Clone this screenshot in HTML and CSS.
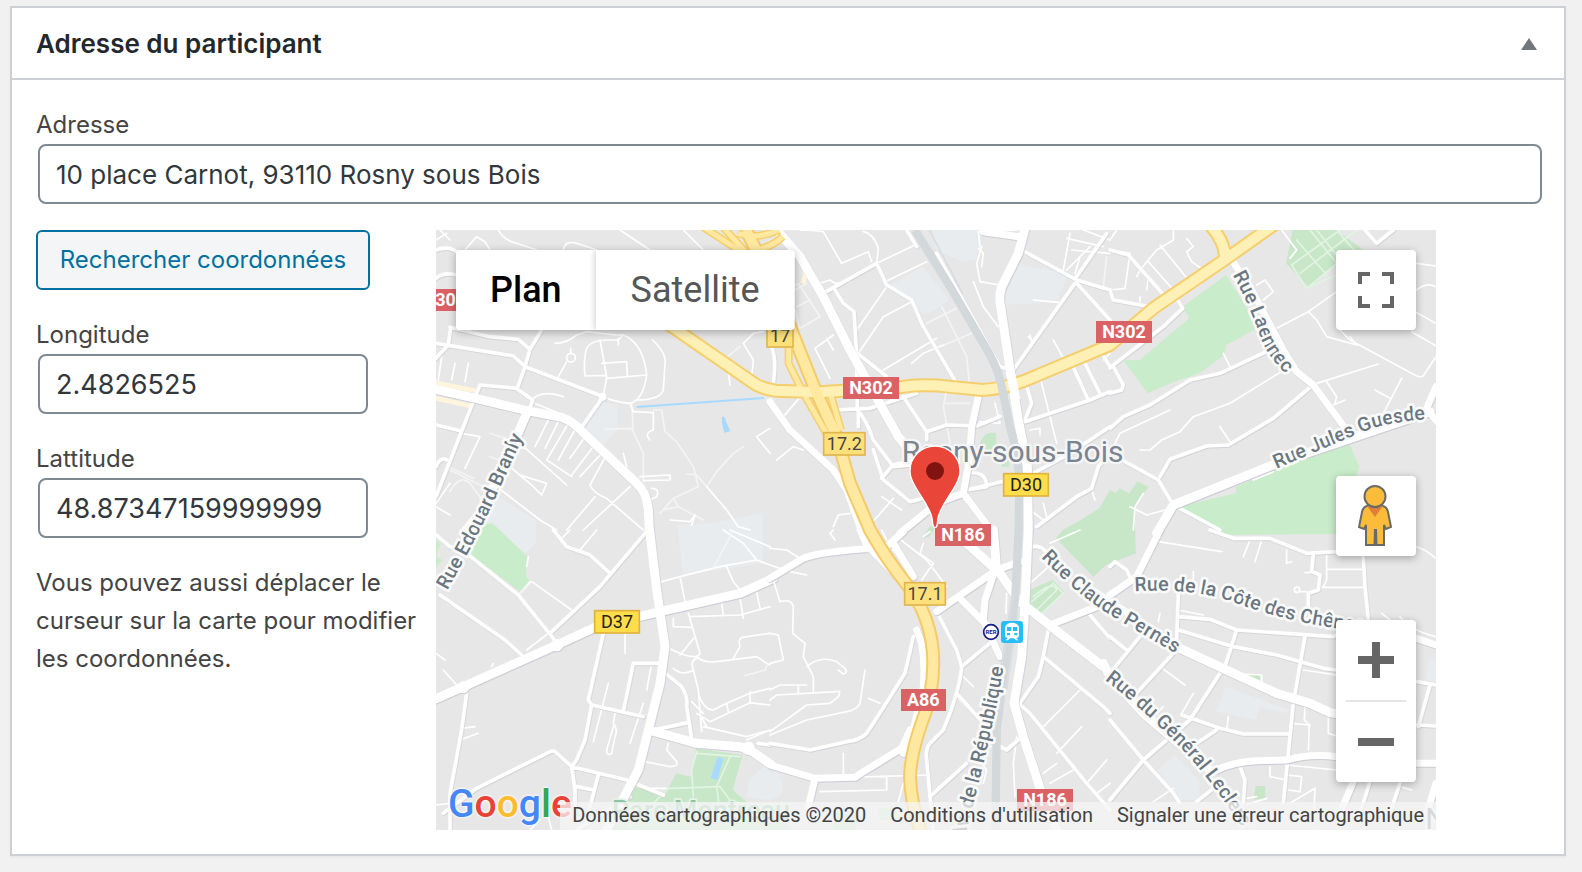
FILE: index.html
```html
<!DOCTYPE html>
<html lang="fr">
<head>
<meta charset="utf-8">
<title>Adresse du participant</title>
<link rel="stylesheet" href="styles.css">
</head>
<body>
<section class="postbox">
  <header class="postbox-header">
    <h2 class="postbox-title">Adresse du participant</h2>
    <button class="toggle" type="button" aria-label="Replier le panneau"><svg class="toggle-icon" viewBox="0 0 16 12"><path d="M8 0 16 12H0z"/></svg></button>
  </header>
  <div class="inside">
    <div class="field">
      <label for="adresse">Adresse</label>
      <input id="adresse" type="text" value="10 place Carnot, 93110 Rosny sous Bois">
    </div>
    <div class="columns">
      <div class="coords">
        <button class="button" type="button">Rechercher coordonnées</button>
        <div class="field">
          <label for="longitude">Longitude</label>
          <input id="longitude" type="text" value="2.4826525">
        </div>
        <div class="field">
          <label for="lattitude">Lattitude</label>
          <input id="lattitude" type="text" value="48.87347159999999">
        </div>
        <p class="help">Vous pouvez aussi déplacer le curseur sur la carte pour modifier les coordonnées.</p>
      </div>
      <div class="map">
        <svg class="map-canvas" viewBox="0 0 3000 1800" preserveAspectRatio="xMidYMid slice" role="img" aria-label="Carte de Rosny-sous-Bois">
          <defs>
            <path id="n302" d="M640 243L960 464Q985 478 1020 482L1152 487L1402 470Q1470 462 1540 470L1640 480Q1720 475 1802 437L2022 345L2152 235L2372 85L2520 -20M2318 -20Q2372 40 2366 90"/>
            <path id="ramps" d="M800 -10L930 75L1010 170M860 -10L950 90M905 10Q960 30 1030 0M960 60Q1010 50 1040 20M1058 340V400L1102 490L1180 625M1180 480L1215 600"/>
            <path id="a86" d="M930 0L985 110L1062 290L1138 480L1202 620L1242 760L1302 900Q1350 985 1402 1050Q1492 1160 1492 1300Q1490 1400 1460 1470Q1424 1570 1422 1640Q1424 1720 1456 1810"/>
            <path id="p-branly" d="M34 1082Q130 910 180 800L282 575"/>
            <path id="p-laennec" d="M2390 134Q2444 234 2472 318Q2500 400 2610 484"/>
            <path id="p-guesde" d="M2522 716Q2650 660 2800 598Q2880 572 3000 566"/>
            <path id="p-cote" d="M2096 1084Q2260 1074 2380 1112Q2570 1184 2780 1204"/>
            <path id="p-pernes" d="M1815 982Q1930 1100 2030 1160L2270 1300"/>
            <path id="p-leclerc" d="M2006 1350Q2130 1444 2246 1566Q2330 1656 2450 1840"/>
            <path id="p-rep" d="M1584 1830Q1640 1620 1670 1480Q1700 1350 1714 1220"/>
          </defs>
          <rect class="land" width="3000" height="1800"/>

          <g class="built">
            <path d="M495 515L545 525V595L500 648L450 590zM170 790L300 870V940L250 985L150 900zM725 885L830 880L980 850L980 1000L740 1035zM895 915L960 990L870 1010z"/>
            <path d="M1490 0H1640L1620 90L1580 95L1500 60zM1365 165L1460 110L1540 210L1470 255L1410 210zM1745 105L1900 130L1860 215L1700 225z"/>
            <path d="M2370 1370L2560 1440L2550 1450L2470 1430L2460 1470L2340 1445zM2215 1575L2290 1650V1710H2230L2165 1620zM2980 1285L3000 1290V1355L2970 1350zM940 1650L1002 1590L1030 1640Q1060 1700 1002 1710L930 1700z"/>
          </g>
          <g class="park">
            <path d="M2370 135L2468 293L2370 345L2365 375L2290 430L2215 455L2135 490L2062 390L2110 390L2260 265L2240 230z"/>
            <path class="soft" d="M2570 0H2700L2790 65L2700 100L2620 175L2550 100z"/>
            <path d="M2738 635L2770 710L2700 900V912L2360 915L2225 830L2400 790L2400 770L2520 720z"/>
            <path class="soft" d="M1880 900L1925 875L1990 835L2022 780L2040 790L2050 775L2080 790L2104 754L2138 770L2095 830L2100 970L2010 1005L1972 1040L1860 925z"/>
            <path class="soft" d="M1630 650Q1640 600 1680 610L1682 660L1640 665zM1700 680h20v30h-24zM1780 1080L1850 1050L1885 1085L1820 1150L1780 1130zM1510 870L1480 920L1460 925L1480 890zM2400 1330L2472 1332V1352z"/>
            <path d="M132 885L170 880L275 980L270 1040L285 1055L252 1085L100 970zM0 930L14 940L0 980zM0 980L20 990L0 1010z"/>
            <path class="soft" d="M780 1555L920 1575L890 1680L960 1740L1080 1800H520L600 1668L690 1690L720 1630L765 1640zM1330 1735h50v36h-50zM1200 1750h70l-10 50h-70zM2458 1668h30v40h-34z"/>
          </g>
          <g class="water">
            <path d="M857 562q8-8 12 10l14 32-18 4q-8-20-8-46zM845 1580l17 6-18 64-20-6z"/>
            <path class="canal" d="M602 531L984 504"/>
          </g>
          <g class="sand"><path d="M0 458L118 482M0 505L105 528M1085 60L1110 130L1100 160"/></g>

          <g class="w4 faint" transform="translate(-18 -30)">
            <path d="M610 630L605 550M525 628L605 625L640 700V780M670 570H695L705 635L740 665L790 740L805 800L730 835L690 880M770 762L800 765L830 800M830 800L860 755L910 700L940 680M180 640L240 660M180 710L250 735M60 815Q90 760 120 790L150 830L160 870M60 750L180 810M885 415L930 380M55 740L130 775M700 870L745 860L820 900M730 835L745 860"/>
          </g>
          <g class="w4" transform="translate(-18 -30)">
            <path d="M205 30Q220 60 260 70L320 90M105 90L140 50L165 65L180 90M400 90Q405 60 440 70L500 90M570 30L660 90M760 30L820 90M18 60L50 40M30 30L60 60"/>
            <path d="M375 370Q410 370 440 345L470 335L560 345L580 345Q640 370 650 465Q640 540 600 550Q550 545 520 530M510 360L530 470L520 530M465 468L530 466M465 468Q460 430 468 390Q480 360 530 360L565 360L580 345M515 430L590 425L592 468M530 475L650 465M565 355V375M668 360Q710 400 705 430L700 510Q690 540 620 540M385 470L410 425M422 385V400"/><circle cx="423" cy="413" r="13"/>
            <path d="M303 545L400 585M310 535Q340 510 400 530M600 550L610 575L670 578V630Q640 640 660 660M940 370L970 340L1000 335M940 370L970 420L965 470M895 455L900 495M980 650L1020 625M980 650L1020 700"/>
            <path d="M355 600L315 680M385 605L345 685M415 610L350 720L425 770M440 620L385 720M465 650L420 715M490 680L425 765M515 700L450 770M525 712L480 795Q490 820 530 835L640 930M270 670L410 795M240 740L310 800L335 825L350 790L270 765M75 430L65 480M115 430L105 485M35 410L25 480M95 640L150 650L105 745M200 800L330 900L380 930M630 770L720 765V780L640 782M665 805Q690 805 680 830L665 838M830 800L890 870L925 920L960 930M720 900L780 905L795 885L785 915M600 800L460 930M495 830L410 930M18 860L60 885M18 850L60 790M580 700L590 740"/>
          </g>
          <g class="w9" transform="translate(-18 -30)">
            <path d="M18 370L250 408L285 440L520 530M520 530L458 618M285 440L262 505L150 495L130 545L18 830M262 508L308 540L295 580M60 322L180 350L265 358L300 388L335 330M300 388L285 440M62 322L55 375L18 415M18 90Q60 75 85 100M18 175Q40 155 80 165M18 615L90 632M18 740Q30 710 50 720"/><circle class="dot" cx="518" cy="530" r="8"/>
          </g>
          <g class="w24" transform="translate(-18 -30)">
            <path d="M18 508L150 538L290 572L395 592Q430 605 460 638L620 790Q650 815 655 870L658 935M292 575L230 720L150 880L100 940"/>
          </g>

          <g class="w4 faint" transform="translate(1002 -30)">
            <path d="M70 200L85 190L150 290L90 325L75 270M75 210L110 190M80 260L120 240M470 310L560 265M515 260L590 410L598 490M510 380L605 340M530 510L520 560L540 670M525 550H600M1010 110L1000 200"/>
          </g>
          <g class="w4" transform="translate(1002 -30)">
            <path d="M90 30Q130 30 160 35L215 130L295 95L305 125M280 35Q310 40 325 85L320 130M150 190L180 180L195 190L240 185M320 130L435 75M350 200L260 330M345 185L470 125M425 245L340 290L265 400M500 355L340 450M520 375L460 400L425 430M190 345L135 385L180 475M170 355L190 390M635 80L620 130L630 185L690 195M625 85L640 100L635 140M610 185L640 260L685 320M790 240L865 247M780 345L785 365M850 360L880 415M775 350L790 365M900 40L880 150M890 55L1000 80M905 90L1020 100M940 30L1020 60M960 80L890 150M915 160L930 110"/>
            <path d="M740 30L625 35L630 80M335 830L395 870M190 920L205 885L240 880M300 915L370 835M100 520L40 590M20 720L70 680L100 690M675 550L690 610L630 605M820 850L830 890M965 810L975 840M780 630L810 625V645M810 470L860 670M780 870L820 900M1000 420L1020 400M640 525L680 510"/>
          </g>
          <g class="w9" transform="translate(1002 -30)">
            <path d="M160 220L320 130L350 195L425 240L460 320L560 490M195 210L220 250L252 275L260 400L262 560M262 400L350 470M195 570L300 565L440 520M262 570Q290 600 310 660L370 740L420 735M365 740L335 775M400 530L470 635L530 615L620 618L690 590M265 580L265 620M310 690L340 780L420 845L480 830M370 735L430 720M470 640V660M5 380Q20 420 10 490M410 30L440 80M500 100L690 440L720 450M755 90L920 180L1020 210M915 190L730 450M920 190L1020 300M1010 40L920 170M905 430L955 540M940 420L990 520M765 605L960 540L1020 515M990 390L1020 440M765 480L785 550L765 600M790 760L900 700L1020 620M1020 700L985 740L965 805L920 830L800 920M590 760Q650 750 650 800L590 810L740 775"/>
          </g>
          <g class="w24" transform="translate(1002 -30)">
            <path d="M20 30L90 110L160 230L240 390L290 480L385 650L500 790"/>
            <path d="M765 25L745 100L695 200Q685 230 692 260L722 460L745 600L772 740L775 935"/>
            <path class="mid" d="M625 530L605 620L598 720L580 820L640 900L670 940M580 820L500 850L390 940M0 545L60 630L190 750L230 810L275 935M640 35L745 50"/>
          </g>

          <g class="w4 onpark" transform="translate(2022 -30)">
            <path d="M545 135L690 30M570 160L740 30M590 205L680 130L600 30M545 135L590 205L690 160M560 60L650 165M620 30L700 130M680 30L740 100"/>
          </g>
          <g class="w4" transform="translate(2022 -30)">
            <path d="M0 60L20 30M190 30V60L140 90L90 150L80 170M150 75L235 180M230 95L250 80L230 55M230 95L245 125L280 150M115 125L190 210M0 90L60 100L45 205L0 210M110 210L115 170M90 245V230M515 30L560 90L540 115M340 400L360 440M0 700L30 640L180 570M90 690H120L155 660L210 635L250 590L360 550L530 445M595 275L500 325M595 275L620 300L650 350L740 375M595 275L680 215M690 330L720 360L920 468Q940 475 945 460L978 410M920 130L978 138M920 210Q950 185 978 200M915 275L978 310M905 335L978 378M620 490L805 432M650 485L680 530L675 550M670 555L705 540M820 580L875 475M795 510L840 535M330 620L360 665M440 195L465 180L490 215L460 240M420 770L430 780L490 755M70 930L75 860L100 820M60 860L110 885L165 870M720 350L740 375"/>
          </g>
          <g class="w9" transform="translate(2022 -30)">
            <path d="M0 90L55 105L170 235M0 210L10 240L130 262M200 235L218 265L160 320L10 435L0 445M10 440L40 495L35 510L0 520M0 625L40 590L120 555L240 480L330 460L490 385M605 498L490 595L355 675L290 678L180 718L150 770M0 700L145 780L190 855M200 860L330 930M765 30L800 70L850 30"/>
          </g>
          <g class="w24" transform="translate(2022 -30)">
            <path class="mid" d="M365 120L420 200L520 390L560 455L610 495L710 630M978 500L950 565L985 610"/><path d="M140 940L190 855L500 730L960 575"/>
          </g>

          <g class="w4" transform="translate(-18 900)">
            <path d="M305 155L425 240M290 110L295 80M300 155L270 190M290 360L355 310M500 0L450 60M420 0L390 30M18 370L45 390M40 420L80 465M190 400L185 410M585 310V370M535 460L490 635M555 550L550 580Q565 600 555 620L545 670Q530 680 530 660L550 590M665 400L650 480M640 520L600 640M95 595L135 590M90 630L145 610M18 825L60 820M695 155L750 140L870 110L980 90M750 140L765 215M890 110L910 155L930 180M875 220L880 255M930 205L940 265M980 185L990 235M780 260L930 255L1020 230M730 265V290L785 292M775 250L810 370Q800 390 750 370L715 355M795 320L750 375M800 380Q820 400 860 395L980 380L1010 400L1020 405M730 415Q760 440 790 420Q780 390 800 385M790 420L805 480L815 605M805 490Q820 540 850 540L890 520L960 490L1020 475M785 515L820 550M810 555L830 590M800 550L840 575L960 518L1020 525M890 520L895 545M960 485V520M820 590L950 620L1020 600M950 630L1020 600M910 385L930 350Q920 320 950 320L1020 310M645 695L720 710Q745 710 740 695L710 660L715 640M710 775H650L600 765M880 0L940 40L980 90L1020 105M900 0L1020 50M330 870L300 900M355 860L365 900"/>
            <path class="faint" d="M945 437L1005 420L1012 405M905 10L850 115M270 190L305 155"/>
          </g>
          <g class="w4 onpark" transform="translate(-18 900)">
            <path d="M800 670L930 680M800 665L785 720L790 800M700 780L720 775L870 770L900 810L930 820M900 680L860 770L870 850M700 790L600 890M740 850L830 830"/>
          </g>
          <g class="w9" transform="translate(-18 900)">
            <path d="M18 15L60 50L110 70L265 195L370 325M370 0L410 50L480 75L540 130M650 5L510 170L360 310M30 195L225 330L275 375M520 310L475 510L485 525L640 560M485 525L465 630L440 690L425 710L435 780V850M610 400H690M610 400L580 545M425 710L590 750M590 750L700 795M505 735L475 850M440 770L490 780M425 710L375 665Q370 660 350 670L140 775L40 850M110 490L95 600L60 790V900M700 425L755 470Q775 500 770 530L785 625M670 600L775 578M985 640L1020 645M600 800L440 900"/>
          </g>
          <g class="w24" transform="translate(-18 900)">
            <path d="M658 -5L680 180L705 350L690 460L655 600L625 720L530 900M655 600L800 640L930 650L960 660L1025 705"/><path d="M10 510L100 470L380 345L500 290L690 245L930 190L1030 145"/>
            <circle class="dot" cx="381" cy="345" r="15"/><circle class="dot" cx="100" cy="472" r="14"/><circle class="dot" cx="955" cy="655" r="16"/>
          </g>

          <g class="w4" transform="translate(1002 900)">
            <path d="M190 0L180 10L195 30M0 55L50 60L90 85M0 105L60 125L110 135M10 150L30 215Q65 205 70 230L68 310L105 340L100 380L130 440V490M0 310L25 315L40 390L0 400M110 410Q150 375 200 395L225 415Q235 430 220 432L205 420M0 480L30 465H110M85 465V490M0 510L20 495L200 485Q215 480 205 500L180 520L110 525L0 605M285 420L270 520Q260 540 230 545L110 570L0 615M295 505L330 520M220 670V735M130 745L470 735M350 740V780L150 785M400 760L385 815M380 20L470 90L530 170M460 40L450 70L490 100L455 150M575 435L610 470M560 500L640 580M660 340L575 410M620 680L650 720L640 760M930 480L820 590M935 590L860 670M820 730L860 700M910 720L840 760M1010 690L950 760M980 790L1020 760M740 620L730 700L735 800M780 160L870 80M840 40L930 0M710 190L708 250M690 650H660"/>
            <path d="M460 20L480 5M335 0L350 30M355 45L430 130"/>
          </g>
          <g class="w4 onpark" transform="translate(1002 900)"><path d="M785 215L850 160L880 190L815 250M790 200Q850 150 860 180L800 240"/></g>
          <g class="w9" transform="translate(1002 900)">
            <path d="M500 245L560 360L575 410Q570 480 520 600L480 640Q465 660 470 690L480 800L490 900M430 320L405 430Q330 550 290 610Q270 630 230 635L120 660L0 640M480 800L590 700M835 300L820 380L805 440L750 520M820 380L1000 530L1020 550M745 520L780 550L950 760L1020 840M750 625L710 660L690 650M960 255L1020 325M560 490L640 580M575 410L660 340"/>
            <path d="M790 50Q815 45 830 70"/>
          </g>
          <g class="w24" transform="translate(1002 900)">
            <path class="mid" d="M0 145L100 85Q150 65 310 55M310 55L350 50L400 5M0 705L135 745L255 742L280 725L395 655L420 600M135 745L115 830M500 245L550 210L680 120L750 95M565 200L640 275L670 310M675 120L645 210L640 270L690 380M440 300L455 340Q465 400 460 470L430 600L400 670M270 0L290 45L400 160M370 40L430 140"/>
            <path d="M590 40L690 130L750 215L850 295L1025 430M775 -5L765 220L755 380L732 520L760 620L815 790L860 900M670 0L680 120"/>
            <path class="mid" d="M840 285L980 230L1025 195"/>
          </g>

          <g class="w4" transform="translate(2022 900)">
            <path d="M145 35L335 65M420 30L400 80M455 30L435 95M530 60V100L545 95M650 75V150L640 170M650 118H755M585 128H620M630 172H760M570 185H590M280 255L205 240M150 250L145 275M250 125V150M815 250L840 270M150 410L225 465M250 490L215 550M160 530L130 560M355 560L350 600M260 640L330 600M130 815L190 775M360 430L455 435V455M580 420L680 435M585 525L583 570L598 585L595 660M545 580L600 585M655 560V610L680 618M480 710V740L530 750M530 735L575 740L570 785L535 780M540 820L615 775L610 880M440 800L410 805M390 830L470 805M530 705L680 720M870 770L905 780M870 260Q900 300 978 320M920 50Q950 60 978 85M380 840L440 870"/><circle cx="561" cy="179" r="8"/>
          </g>
          <g class="w9" transform="translate(2022 900)">
            <path d="M300 0L370 25L480 25L590 70L680 65M610 75L605 125L630 135L625 180L595 190V240M760 80L765 170L775 270M0 110L15 95L50 120L65 150M205 190L200 330M205 260L300 268L380 300L670 320L690 310M205 300L370 350L500 375L640 415L680 420M380 300L345 410M585 320L550 520L520 820M90 320L0 430M0 320L50 360M200 340L190 370L80 490M330 430L240 570L100 690L0 810M215 555L330 595L400 612H540M0 570L100 690L190 790L210 820M390 710L405 750L400 820M780 755L750 850M870 760L840 850M920 455L978 465M960 465L925 590M920 585L978 588M320 600L260 640M260 815L330 760"/>
          </g>
          <g class="w24" transform="translate(2022 900)">
            <path class="mid" d="M150 0L80 140L0 195"/><path d="M210 355L345 418L500 490L600 520L660 548L700 555M-20 400L0 440L100 550L300 720"/>
            <path class="mid" d="M-100 150L100 280L215 358M320 720Q370 695 440 692L530 690Q600 670 680 680M730 755L690 850M920 325L978 345M918 700H978M978 760L950 850"/>
          </g>

          <use href="#ramps" class="yellow-case thin"/><use href="#n302" class="yellow-case"/><use href="#a86" class="orange-case"/>
          <use href="#ramps" class="yellow thin"/><use href="#n302" class="yellow"/><use href="#a86" class="orange"/>
          <path class="over" d="M1722 420L1740 510"/>
          <path class="rail" d="M1437 0L1542 170L1642 340Q1680 400 1695 460L1722 590Q1750 690 1750 760L1748 900L1738 1100L1702 1340L1682 1500L1678 1800"/>
          <path class="rail-line" d="M1480 0L1580 190M1730 1100L1700 1290L1672 1500M1745 1150L1712 1380"/>

          <g class="street">
            <text><textPath href="#p-branly">Rue Edouard Branly</textPath></text>
            <text><textPath href="#p-laennec">Rue Laennec</textPath></text>
            <text><textPath href="#p-guesde">Rue Jules Guesde</textPath></text>
            <text><textPath href="#p-cote">Rue de la Côte des Chênes</textPath></text>
            <text><textPath href="#p-pernes">Rue Claude Pernès</textPath></text>
            <text><textPath href="#p-leclerc">Rue du Général Leclerc</textPath></text>
            <text><textPath href="#p-rep">Av. de la République</textPath></text>
          </g>
          <text class="city" x="1730" y="695">Rosny-sous-Bois</text>
          <text class="city" x="3000" y="1796">N</text>
          <text class="park-name" x="528" y="1770">Parc Montreau</text>

          <g class="shield red">
            <rect x="-60" y="177" width="168" height="66"/><text x="44" y="229">302</text>
            <rect x="1221" y="441" width="168" height="66"/><text x="1305" y="493">N302</text>
            <rect x="1980" y="273" width="168" height="66"/><text x="2064" y="325">N302</text>
            <rect x="1497" y="882" width="168" height="66"/><text x="1581" y="934">N186</text>
            <rect x="1395" y="1377" width="135" height="66"/><text x="1462" y="1429">A86</text>
            <rect x="1743" y="1677" width="168" height="66"/><text x="1827" y="1729">N186</text>
          </g>
          <g class="shield exit">
            <rect x="993" y="283" width="78" height="68"/><text x="1032" y="336">17</text>
            <rect x="1163" y="608" width="124" height="67"/><text x="1225" y="661">17.2</text>
            <rect x="1406" y="1058" width="122" height="67"/><text x="1467" y="1110">17.1</text>
          </g>
          <g class="shield county">
            <rect x="1703" y="731" width="134" height="67"/><text x="1770" y="783">D30</text>
            <rect x="476" y="1142" width="134" height="67"/><text x="543" y="1194">D37</text>
          </g>

          <g transform="translate(1695 1173)">
            <rect class="station" width="66" height="66" rx="9"/>
            <path class="train" d="M20 8Q33 3 46 8Q54 12 54 20V42Q54 50 46 51L52 58H45L39 52H27L21 58H14L20 51Q12 50 12 42V20Q12 12 20 8z"/>
            <path class="station" d="M18 18H31V30H18zM36 18H49V30H36zM18 36H27V43H18zM40 36H49V43H40z"/>
          </g>
          <circle class="rer" cx="1665" cy="1206" r="22"/><text class="rer-text" x="1665" y="1213">RER</text>

          <path class="pin" d="M1497 893C1491 893 1490 886 1489 870C1484 820 1422 770 1422 723A75 75 0 0 1 1572 723C1572 770 1510 820 1505 870C1504 886 1503 893 1497 893z"/>
          <circle class="pin-dot" cx="1497" cy="723" r="27"/>
        </svg>
        <div class="map-types">
          <button class="map-type active" type="button">Plan</button><button class="map-type" type="button">Satellite</button>
        </div>
        <button class="control fullscreen" type="button" aria-label="Plein écran"><svg width="36" height="36" viewBox="0 0 18 18"><path d="M0 0v6h2V2h4V0zM12 0v2h4v4h2V0zM16 12v4h-4v2h6v-6zM2 12H0v6h6v-2H2z"/></svg></button>
        <div class="map-side">
          <button class="control" type="button" aria-label="Street View">
            <svg width="36" height="62" viewBox="0 0 36 62"><path class="peg" d="M9 21Q5 22 4 27L1 42L6 44L8 40V60H16.500L17 45H18L18.500 60H26V40L28 44L33 42L30 27Q29 22 25 21z"/><path class="peg-shade" d="M9 21H25L17 32z"/><circle class="peg" cx="17" cy="11.500" r="10.500"/></svg>
          </button>
          <div class="zoom">
            <button type="button" aria-label="Zoom avant"><svg width="36" height="36" viewBox="0 0 18 18"><path d="M18 7h-7V0H7v7H0v4h7v7h4v-7h7z"/></svg></button>
            <button type="button" aria-label="Zoom arrière"><svg width="36" height="36" viewBox="0 0 18 18"><path d="M0 7h18v4H0z"/></svg></button>
          </div>
        </div>
        <div class="google"><span class="blue">G</span><span class="red-l">o</span><span class="gold">o</span><span class="blue">g</span><span class="green">l</span><span class="red-l">e</span></div>
        <div class="credits"><span>Données cartographiques ©2020</span><a href="#conditions">Conditions d'utilisation</a><a href="#erreur">Signaler une erreur cartographique</a></div>
      </div>
    </div>
  </div>
</section>
</body>
</html>
```
FILE: styles.css
```css
* { box-sizing: border-box; }
body {
  margin: 0;
  padding: 6px 16px 16px 10px;
  background: #f1f1f1;
  color: #444;
  font: 24px/38px Inter, "Liberation Sans", sans-serif;
}
button, input { font: inherit; margin: 0; }
button { cursor: pointer; }

.postbox {
  background: #fff;
  border: 2px solid #ccd0d4;
  box-shadow: 0 2px 2px rgba(0, 0, 0, .04);
}
.postbox-header {
  display: flex;
  align-items: center;
  justify-content: space-between;
  height: 72px;
  padding: 2px 27px 0 24px;
  border-bottom: 2px solid #ccd0d4;
}
.postbox-title { margin: 0; font-size: 26px; font-weight: 600; color: #23282d; }
.toggle { display: flex; padding: 0; border: 0; background: none; }
.toggle-icon { width: 16px; height: 12px; fill: #72777c; }

.inside { padding: 26px 22px 24px 24px; }
.field { display: flex; flex-direction: column; }
.field input {
  height: 60px;
  margin-left: 2px;
  padding: 0 16px;
  border: 2px solid #7e8993;
  border-radius: 8px;
  background: #fff;
  color: #32373c;
  font-size: 26px;
}
.columns {
  display: grid;
  grid-template-columns: minmax(0, 400px) minmax(0, 1000px);
  margin-top: 26px;
}
.coords { display: flex; flex-direction: column; gap: 26px; }
.coords .field { width: 332px; }
.coords .field input { font-size: 27px; }
.button {
  align-self: flex-start;
  width: 334px;
  height: 60px;
  padding: 0;
  border: 2px solid #0071a1;
  border-radius: 6px;
  background: #f3f5f6;
  color: #0071a1;
}
.help { margin: 0; padding-right: 8px; }

.map { position: relative; height: 600px; overflow: hidden; font-family: Roboto, sans-serif; }
.map-canvas { display: block; width: 100%; height: 100%; }
.map-canvas path, .map-canvas use, .map-canvas circle { stroke-linejoin: round; }
.land { fill: #e7e7e7; }
.built { fill: #e8ecef; }
.park { fill: #c9edca; }
.park .soft { fill: #c8e7c9; }
.water { fill: #a8daff; }
.canal { stroke: #a8daff; stroke-width: 6; }
.sand { fill: none; stroke: #fef5dc; stroke-width: 14; }
.w4, .w9, .w24 { fill: none; stroke: #fff; stroke-linecap: round; }
.w4 { stroke-width: 5; }
.w9 { stroke-width: 11; filter: drop-shadow(2px 3px 0 #d3d4da); }
.w24 { stroke-width: 27; filter: drop-shadow(2px 3px 0 #cbccd4); }
.w24 .mid { stroke-width: 21; }
.w24 .dot, .w9 .dot { fill: #fff; stroke-width: 8; }
.faint { stroke: #f4f4f4; }
.onpark { stroke: #e2f4e2; }
.yellow, .orange, .yellow-case, .orange-case { fill: none; }
.yellow-case { stroke: #f6cf6d; stroke-width: 42; }
.yellow { stroke: #fff0b6; stroke-width: 30; }
.orange-case { stroke: #f4cb68; stroke-width: 42; }
.orange { stroke: #ffe8a0; stroke-width: 30; }
.yellow-case.thin { stroke-width: 24; }
.yellow.thin { stroke-width: 15; stroke: #ffe8a0; }
.over { fill: none; stroke: #fff; stroke-width: 27; }
.rail { fill: none; stroke: #d3d8db; stroke-width: 25; }
.rail-line { fill: none; stroke: #d9dde0; stroke-width: 5; }
.street text {
  font-size: 59px;
  font-weight: 500;
  fill: #6b7780;
  stroke: #fafafa;
  stroke-width: 16;
  stroke-linejoin: round;
  paint-order: stroke;
}
.city {
  font-size: 90px;
  fill: #7b848f;
  stroke: #f5f5f5;
  stroke-width: 14;
  stroke-linejoin: round;
  paint-order: stroke;
  text-anchor: middle;
}
.park-name { font-size: 81px; font-weight: 500; fill: #8fc3a4; stroke: #e4f3e5; stroke-width: 10; paint-order: stroke; }
.shield text { font-size: 54px; text-anchor: middle; }
.red rect { fill: #db6264; }
.red text { fill: #fff; font-weight: 700; }
.exit rect { fill: #fee07a; stroke: #dfb64f; stroke-width: 5; }
.exit text { fill: #444; }
.county rect { fill: #ffdd4b; stroke: #e0b43c; stroke-width: 5; }
.county text { fill: #222; }
.station { fill: #27bdfb; }
.train { fill: #fff; }
.rer { fill: #fff; stroke: #171e86; stroke-width: 5; }
.rer-text { font-size: 18px; font-weight: 700; fill: #171e86; text-anchor: middle; }
.pin { fill: #ea4539; stroke: #fff; stroke-width: 4; }
.pin-dot { fill: #811411; }

.map-types {
  position: absolute;
  left: 20px;
  top: 20px;
  display: flex;
  height: 80px;
  border-radius: 4px;
  box-shadow: 0 2px 8px rgba(0, 0, 0, .3);
}
.map-type {
  padding: 0 35px;
  border: 0;
  border-radius: 0 4px 4px 0;
  background: #fff;
  color: #565656;
  font-size: 36px;
}
.map-type.active { padding: 0 34px; border-radius: 4px 0 0 4px; color: #000; font-weight: 500; }
.map-type + .map-type { box-shadow: -1px 0 6px rgba(0, 0, 0, .2); clip-path: inset(0 0 0 -8px); }
.control, .zoom {
  width: 80px;
  border: 0;
  border-radius: 4px;
  background: #fff;
  box-shadow: 0 2px 8px rgba(0, 0, 0, .3);
  fill: #666;
}
.control { display: flex; align-items: center; justify-content: center; height: 80px; padding: 0; }
.fullscreen { position: absolute; right: 20px; top: 20px; }
.map-side {
  position: absolute;
  right: 20px;
  bottom: 48px;
  display: flex;
  flex-direction: column;
  gap: 64px;
}
.zoom { display: flex; flex-direction: column; padding: 0 10px; }
.zoom button {
  display: flex;
  align-items: center;
  justify-content: center;
  height: 80px;
  padding: 0;
  border: 0;
  background: none;
}
.zoom button + button { height: 82px; border-top: 2px solid #e6e6e6; }
.peg { fill: #fbbc3c; stroke: #6b6b66; stroke-width: 2; }
.peg-shade { fill: #e07f3a; }
.google {
  position: absolute;
  left: 12px;
  bottom: 6px;
  font: 500 39px/40px Roboto, sans-serif;
  text-shadow: 0 0 3px #fff, 0 0 3px #fff;
}
.blue { color: #4487f5; }
.red-l { color: #e94236; }
.gold { color: #fbbc2d; }
.green { color: #34a753; }
.credits {
  position: absolute;
  right: 0;
  bottom: 0;
  display: flex;
  height: 28px;
  background: rgba(245, 245, 245, .75);
  font-size: 20px;
  line-height: 26px;
  white-space: nowrap;
}
.credits span, .credits a { padding: 0 12px; color: #444; text-decoration: none; }
```
